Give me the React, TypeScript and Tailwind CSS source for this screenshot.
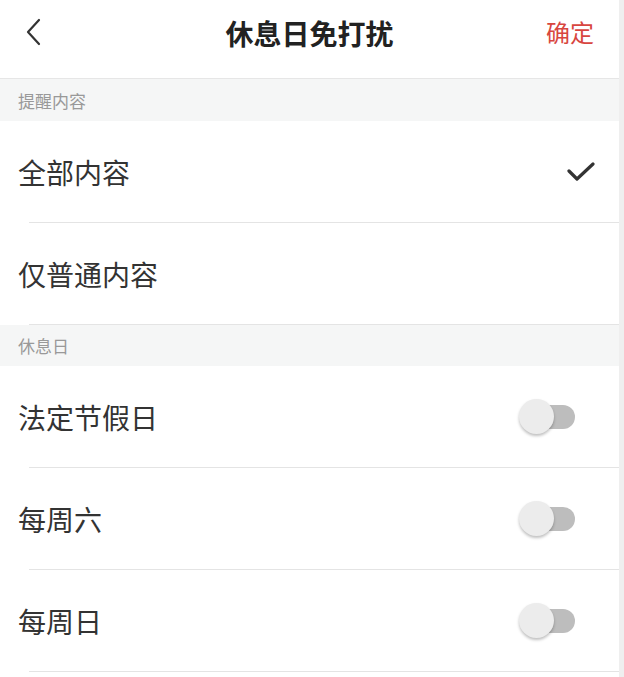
import React from "react";

const font = { fontFamily: '"Noto Sans CJK SC", "Noto Sans", sans-serif' };

function Toggle() {
  return (
    <div className="relative w-[56px] h-[36px] flex items-center mr-[19px]">
      <div className="absolute left-[8px] right-0 h-[24px] rounded-full bg-[#bdbdbd]" />
      <div className="absolute left-0 w-[35px] h-[35px] rounded-full bg-[#ececec] shadow-[0_2px_3px_rgba(0,0,0,0.25)]" />
    </div>
  );
}

function Row({ label, right }: { label: string; right?: React.ReactNode }) {
  return (
    <div className="bg-white">
      <div className="h-[101px] flex items-center justify-between pl-[18px] pr-[25px]">
        <span className="text-[28px] leading-none text-[#333]">{label}</span>
        {right}
      </div>
      <div className="ml-[29px] h-px bg-[#e4e4e4]" />
    </div>
  );
}

function Section({ label, h }: { label: string; h: string }) {
  return (
    <div className={`${h} bg-[#f5f6f6] flex items-center pl-[18px]`}>
      <span className="text-[17px] leading-none text-[#999]">{label}</span>
    </div>
  );
}

export default function App() {
  return (
    <div className="w-[624px] h-[677px] flex bg-white overflow-hidden" style={font}>
      <div className="flex-1 flex flex-col">
        <div className="h-[79px] relative flex items-start justify-center pt-[19px] border-b border-[#e6e6e6] bg-white">
          <svg className="absolute left-[24px] top-[18px]" width="20" height="28" viewBox="0 0 20 28">
            <path d="M15 2 L4 14 L15 26" fill="none" stroke="#333" strokeWidth="2.2" strokeLinecap="round" strokeLinejoin="round" />
          </svg>
          <span className="text-[28px] font-bold leading-none text-[#222]">休息日免打扰</span>
          <span className="absolute right-[25px] top-[20px] text-[24px] leading-none text-[#d8463f]">确定</span>
        </div>
        <Section label="提醒内容" h="h-[42px]" />
        <Row
          label="全部内容"
          right={
            <svg width="28" height="22" viewBox="0 0 28 22" className="mr-[-1px]">
              <path d="M2 10 L10 18 L26 3" fill="none" stroke="#333" strokeWidth="3.2" strokeLinecap="round" strokeLinejoin="round" />
            </svg>
          }
        />
        <Row label="仅普通内容" />
        <Section label="休息日" h="h-[41px]" />
        <Row label="法定节假日" right={<Toggle />} />
        <Row label="每周六" right={<Toggle />} />
        <Row label="每周日" right={<Toggle />} />
      </div>
      <div className="w-[5px] bg-[#efefef]" />
    </div>
  );
}
